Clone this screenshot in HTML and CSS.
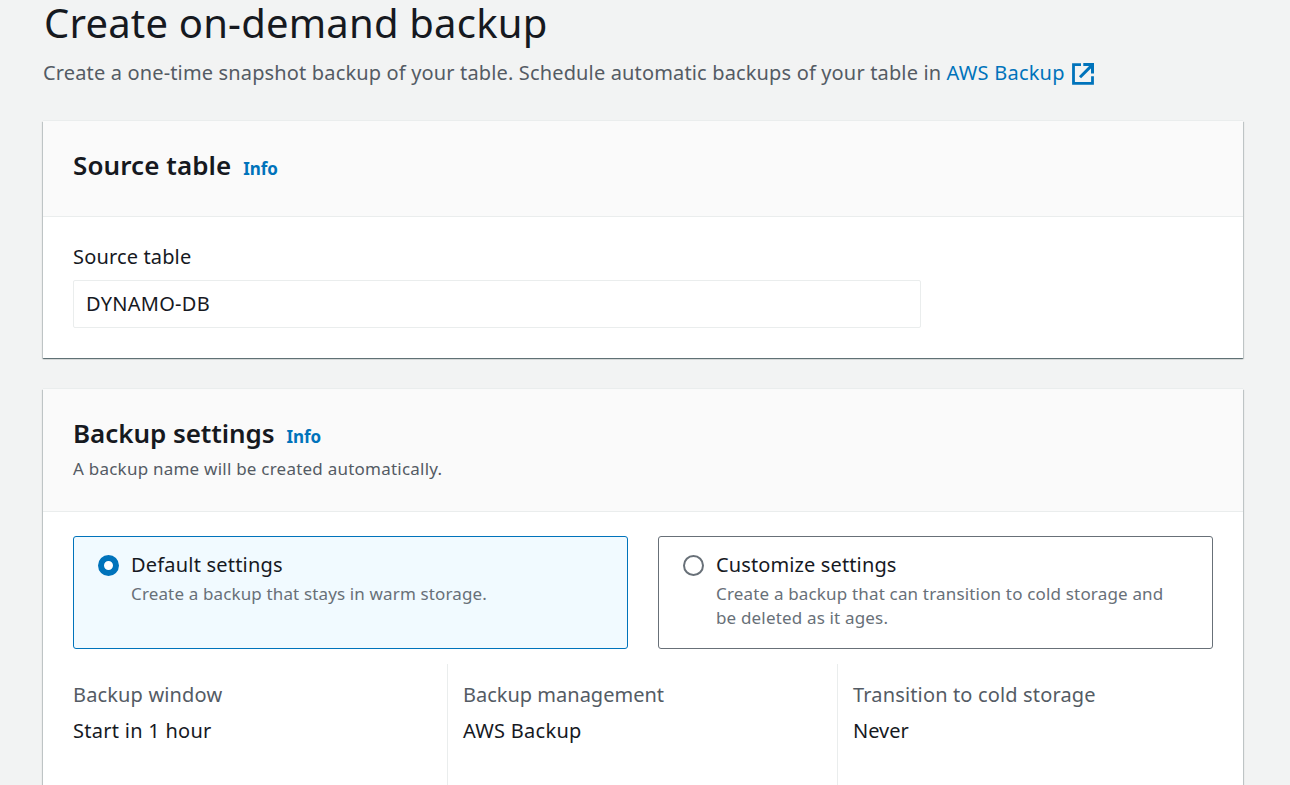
FILE: index.html
```
<!DOCTYPE html>
<html lang="en">
<head>
<meta charset="utf-8">
<title>Create on-demand backup</title>
<link rel="stylesheet" href="styles.css">
</head>
<body>
<main class="page">
  <h1 class="page-title">Create on-demand backup</h1>
  <p class="page-desc">Create a one-time snapshot backup of your table. Schedule automatic backups of your table in <a class="link" href="#">AWS Backup<svg class="external" viewBox="0 0 22 22" fill="none" stroke="currentColor" stroke-width="2.8"><path d="M9 1.6H1.5V20.4H20.5V13.2"/><path d="M11.3 1.6H20.5V10.6M19.6 2.6L8 14.2" stroke-width="3"/></svg></a></p>

  <section class="card">
    <header class="card-header">
      <h2 class="card-title">Source table</h2><a class="info" href="#">Info</a>
    </header>
    <div class="card-body">
      <div class="label">Source table</div>
      <div class="field">DYNAMO-DB</div>
    </div>
  </section>

  <section class="card settings">
    <header class="card-header">
      <h2 class="card-title">Backup settings</h2><a class="info" href="#">Info</a>
      <p class="card-desc">A backup name will be created automatically.</p>
    </header>
    <div class="card-body">
      <div class="tiles">
        <div class="tile selected">
          <span class="radio"></span>
          <div>
            <div class="tile-title">Default settings</div>
            <div class="tile-desc">Create a backup that stays in warm storage.</div>
          </div>
        </div>
        <div class="tile">
          <span class="radio"></span>
          <div>
            <div class="tile-title customize">Customize settings</div>
            <div class="tile-desc">Create a backup that can transition to cold storage and<br>be deleted as it ages.</div>
          </div>
        </div>
      </div>
      <div class="columns">
        <div class="column"><div class="key">Backup window</div><div class="value">Start in 1 hour</div></div>
        <div class="column"><div class="key management">Backup management</div><div class="value">AWS Backup</div></div>
        <div class="column"><div class="key">Transition to cold storage</div><div class="value never">Never</div></div>
      </div>
    </div>
  </section>
</main>
</body>
</html>
```
FILE: styles.css
```
* { box-sizing: border-box; }
html, body { height: 785px; overflow: hidden; }
body { margin: 0; background: #f2f3f3; color: #16191f; font: 20px/30px "Noto Sans", sans-serif; letter-spacing: .15px; }
h1, h2, p { margin: 0; font-weight: 400; }
a { color: #0073bb; text-decoration: none; }
.page { display: flex; flex-direction: column; width: 1200px; height: 785px; margin-left: 43px; }
.page-title { padding-left: 1px; font-size: 40px; line-height: 45px; letter-spacing: .2px; }
.page-desc { height: 30px; margin-top: 13px; color: #545b64; }
.link { letter-spacing: .22px; }
.external { width: 22px; height: 22px; margin-left: 7px; vertical-align: -5px; }
.card { margin-top: 33px; background: #fff; box-shadow: 0 1px 1px 0 rgba(0,28,36,.45), 1px 1px 1px 0 rgba(0,28,36,.15), -1px 1px 1px 0 rgba(0,28,36,.15), 0 -1px 0 0 #eaeded; }
.card.settings { flex: 1; min-height: 0; margin-top: 31px; display: flex; flex-direction: column; }
.card-header { height: 96px; padding: 26px 30px 0; background: #fafafa; border-bottom: 1px solid #eaeded; }
.settings .card-header { flex: none; height: 123px; }
.card-title { display: inline-block; font-size: 26px; line-height: 36px; font-weight: 600; letter-spacing: .08px; }
.settings .card-title { letter-spacing: -.06px; }
.info { display: inline-block; margin-left: 12px; font-size: 17px; line-height: 24px; font-weight: 700; letter-spacing: -.1px; }
.card-desc { margin-top: 6px; font-size: 17px; line-height: 24px; letter-spacing: .23px; color: #545b64; }
.card-body { padding: 25px 30px 30px; }
.settings .card-body { flex: 1; min-height: 0; display: flex; flex-direction: column; padding: 24px 30px 0; }
.field { width: 848px; height: 48px; margin-top: 8px; padding: 8px 12px; border: 1px solid #eaeded; border-radius: 2px; letter-spacing: .27px; }
.tiles { display: grid; grid-template-columns: 1fr 1fr; gap: 30px; }
.tile { display: flex; gap: 12px; height: 113px; padding: 13px 24px 0; border: 1px solid #687078; border-radius: 3px; }
.tile.selected { border-color: #0073bb; background: #f1faff; }
.radio { flex: none; width: 21px; height: 21px; margin-top: 5px; border: 2px solid #687078; border-radius: 50%; background: #fff; }
.selected .radio { border: 6px solid #0073bb; }
.tile-title { letter-spacing: .2px; }
.tile-title.customize { letter-spacing: .12px; }
.tile-desc { margin-top: 2px; font-size: 17px; line-height: 24px; letter-spacing: .17px; color: #687078; }
.selected .tile-desc { letter-spacing: .14px; }
.columns { flex: 1; display: grid; grid-template-columns: 374px 390px 1fr; margin-top: 15px; }
.column { padding-top: 16px; }
.column + .column { padding-left: 15px; border-left: 1px solid #eaeded; }
.key { color: #545b64; }
.value { margin-top: 6px; letter-spacing: .27px; }
.key.management, .value.never { letter-spacing: 0; }
```
